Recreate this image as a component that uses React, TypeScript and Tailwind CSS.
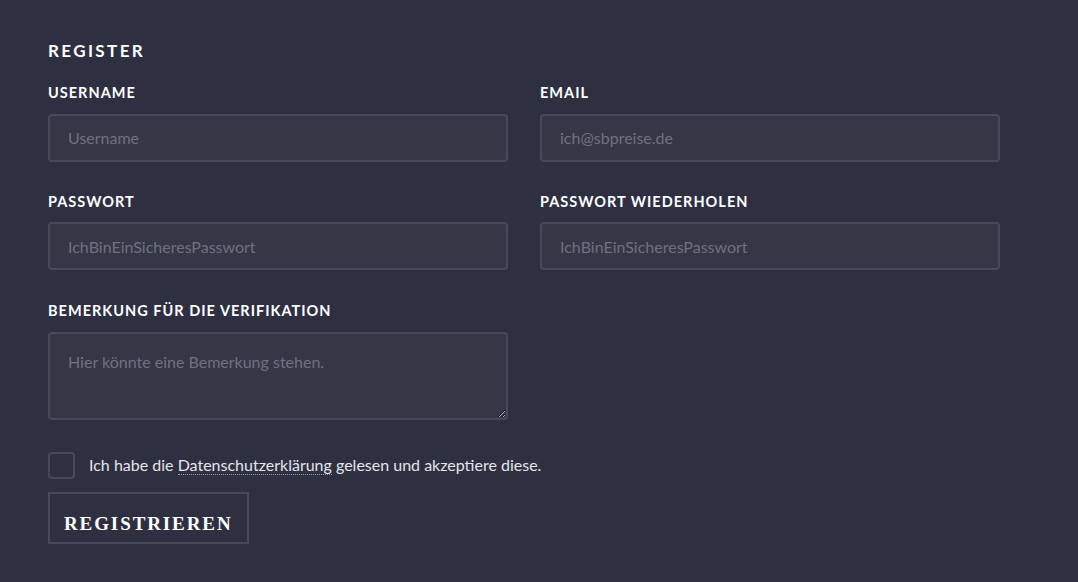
import React from "react";

const inputCls =
  "w-full h-[48px] rounded-[4px] border-2 border-[#474958] bg-[#353746] px-[18px] text-[16px] text-[#d0d1d8] placeholder:text-[#6f717f] outline-none";

function Field({ label, placeholder, type = "text" }: { label: string; placeholder: string; type?: string }) {
  return (
    <div className="flex flex-col">
      <label className="text-[14.5px] font-bold tracking-[0.07em] text-white leading-none mb-[13px]">{label}</label>
      <input type={type} placeholder={placeholder} className={inputCls} />
    </div>
  );
}

export default function App() {
  return (
    <div className="min-h-[582px] w-full bg-[#2e3042] px-12 pt-[42px] font-['Lato',sans-serif]">
      <h1 className="text-[17px] font-bold tracking-[0.14em] text-white leading-none mb-[27px]">REGISTER</h1>
      <div className="grid grid-cols-[460px_460px] gap-x-8 gap-y-[33px]">
        <Field label="USERNAME" placeholder="Username" />
        <Field label="EMAIL" placeholder="ich@sbpreise.de" type="email" />
        <Field label="PASSWORT" placeholder="IchBinEinSicheresPasswort" />
        <Field label="PASSWORT WIEDERHOLEN" placeholder="IchBinEinSicheresPasswort" />
      </div>
      <div className="flex flex-col w-[460px] mt-[34px]">
        <label className="text-[14.5px] font-bold tracking-[0.07em] text-white leading-none mb-[13px]">
          BEMERKUNG FÜR DIE VERIFIKATION
        </label>
        <textarea
          placeholder="Hier könnte eine Bemerkung stehen."
          className="h-[88px] rounded-[4px] border-2 border-[#474958] bg-[#353746] px-[18px] py-[16px] text-[16px] text-[#d0d1d8] placeholder:text-[#6f717f] outline-none"
        />
      </div>
      <div className="flex items-center gap-[14px] mt-[32px]">
        <span className="w-[27px] h-[27px] rounded-[4px] border-2 border-[#474958] bg-[#2e3042]" />
        <span className="text-[16px] text-[#e4e5ea]">
          Ich habe die{" "}
          <a className="border-b border-dotted border-[#9a9cab]">Datenschutzerklärung</a> gelesen und akzeptiere diese.
        </span>
      </div>
      <button className="mt-[13px] h-[52px] w-[201px] border-2 border-[#474958] bg-transparent text-left pl-[14px] pt-[14px] font-['Liberation_Serif',serif] text-[19px] font-bold tracking-[0.1em] text-white">
        REGISTRIEREN
      </button>
    </div>
  );
}
